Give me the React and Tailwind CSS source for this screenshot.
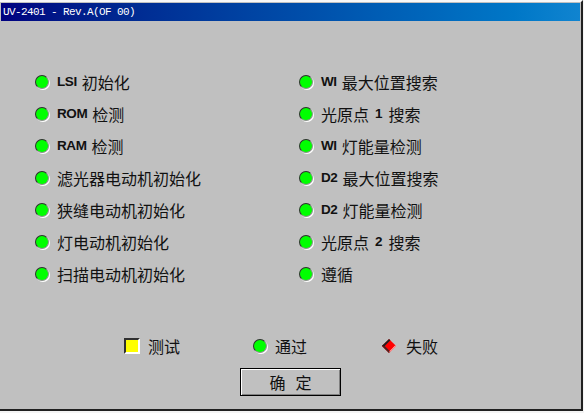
import React from 'react';

const left = [
  [['b', 'LSI'], ['t', '初始化']],
  [['b', 'ROM'], ['t', '检测']],
  [['b', 'RAM'], ['t', '检测']],
  [['t', '滤光器电动机初始化']],
  [['t', '狭缝电动机初始化']],
  [['t', '灯电动机初始化']],
  [['t', '扫描电动机初始化']],
];

const right = [
  [['b', 'WI'], ['t', '最大位置搜索']],
  [['t', '光原点'], ['n', '1'], ['t', '搜索']],
  [['b', 'WI'], ['t', '灯能量检测']],
  [['b', 'D2'], ['t', '最大位置搜索']],
  [['b', 'D2'], ['t', '灯能量检测']],
  [['t', '光原点'], ['n', '2'], ['t', '搜索']],
  [['t', '遵循']],
];

const cjk = { fontFamily: '"Noto Sans CJK SC", "Liberation Sans", sans-serif' };

const Led = () => (
  <div className="w-[14px] h-[14px] shrink-0 rounded-full bg-[#00ff00] border border-t-[#303030] border-l-[#303030] border-r-[#909090] border-b-[#909090] shadow-[1px_1px_0_#ffffff]" />
);

const Label = ({ parts }) => (
  <div className="flex items-center text-[16px] text-[#111]" style={cjk}>
    {parts.map(([kind, txt], i) => {
      if (kind === 'b')
        return (
          <span key={i} className="font-bold text-[13.5px] tracking-[-0.4px] mr-[5px] font-['Liberation_Sans']">{txt}</span>
        );
      if (kind === 'n')
        return (
          <span key={i} className="font-bold text-[13.5px] mx-[6px] font-['Liberation_Sans']">{txt}</span>
        );
      return <span key={i}>{txt}</span>;
    })}
  </div>
);

const Row = ({ parts }) => (
  <div className="h-[32px] flex items-center gap-[8px]">
    <Led />
    <Label parts={parts} />
  </div>
);

export default function App() {
  return (
    <div className="w-[584px] h-[413px] bg-[#f4f4f4]">
      <div className="w-[583px] h-[411px] bg-[#c0c0c0] border-t-2 border-t-[#f8f8f8] border-r-2 border-b-2 border-r-[#202020] border-b-[#202020] pt-[1px] pl-[1px] pr-[1px] flex flex-col">
        <div className="h-[18px] bg-linear-to-r from-[#000080] to-[#1084d0] flex items-center pl-[2px]">
          <span className="text-white text-[11px] tracking-[-0.6px] font-['Liberation_Mono']">UV-2401 - Rev.A(OF 00)</span>
        </div>

        <div className="mt-[45px] grid grid-cols-[264px_1fr] pl-[34px]">
          <div className="flex flex-col">
            {left.map((p, i) => (
              <Row key={i} parts={p} />
            ))}
          </div>
          <div className="flex flex-col">
            {right.map((p, i) => (
              <Row key={i} parts={p} />
            ))}
          </div>
        </div>

        <div className="mt-[44px] flex items-center pl-[123px] gap-[73px] text-[16px] text-[#111]" style={cjk}>
          <div className="flex items-center gap-[8px]">
            <div className="w-[16px] h-[16px] bg-[#ffff00] border-2 border-t-[#303030] border-l-[#303030] border-r-white border-b-white" />
            <span>测试</span>
          </div>
          <div className="flex items-center gap-[8px]">
            <Led />
            <span>通过</span>
          </div>
          <div className="flex items-center gap-[8px]">
            <div className="w-[18px] h-[18px] flex items-center justify-center">
              <div className="w-[10px] h-[10px] rotate-45 bg-[#ff0000] border-l-2 border-b-2 border-r border-l-[#202020] border-b-[#502020] border-r-[#ffb0b0]" />
            </div>
            <span>失败</span>
          </div>
        </div>

        <div className="mt-[10px] flex justify-center">
          <button className="w-[101px] h-[28px] bg-[#c0c0c0] border border-black shadow-[inset_1px_1px_0_#ffffff,inset_-1px_-1px_0_#808080] flex items-center justify-center gap-[10px] text-[16px] text-[#111]" style={cjk}>
            <span>确</span>
            <span>定</span>
          </button>
        </div>
      </div>
    </div>
  );
}
